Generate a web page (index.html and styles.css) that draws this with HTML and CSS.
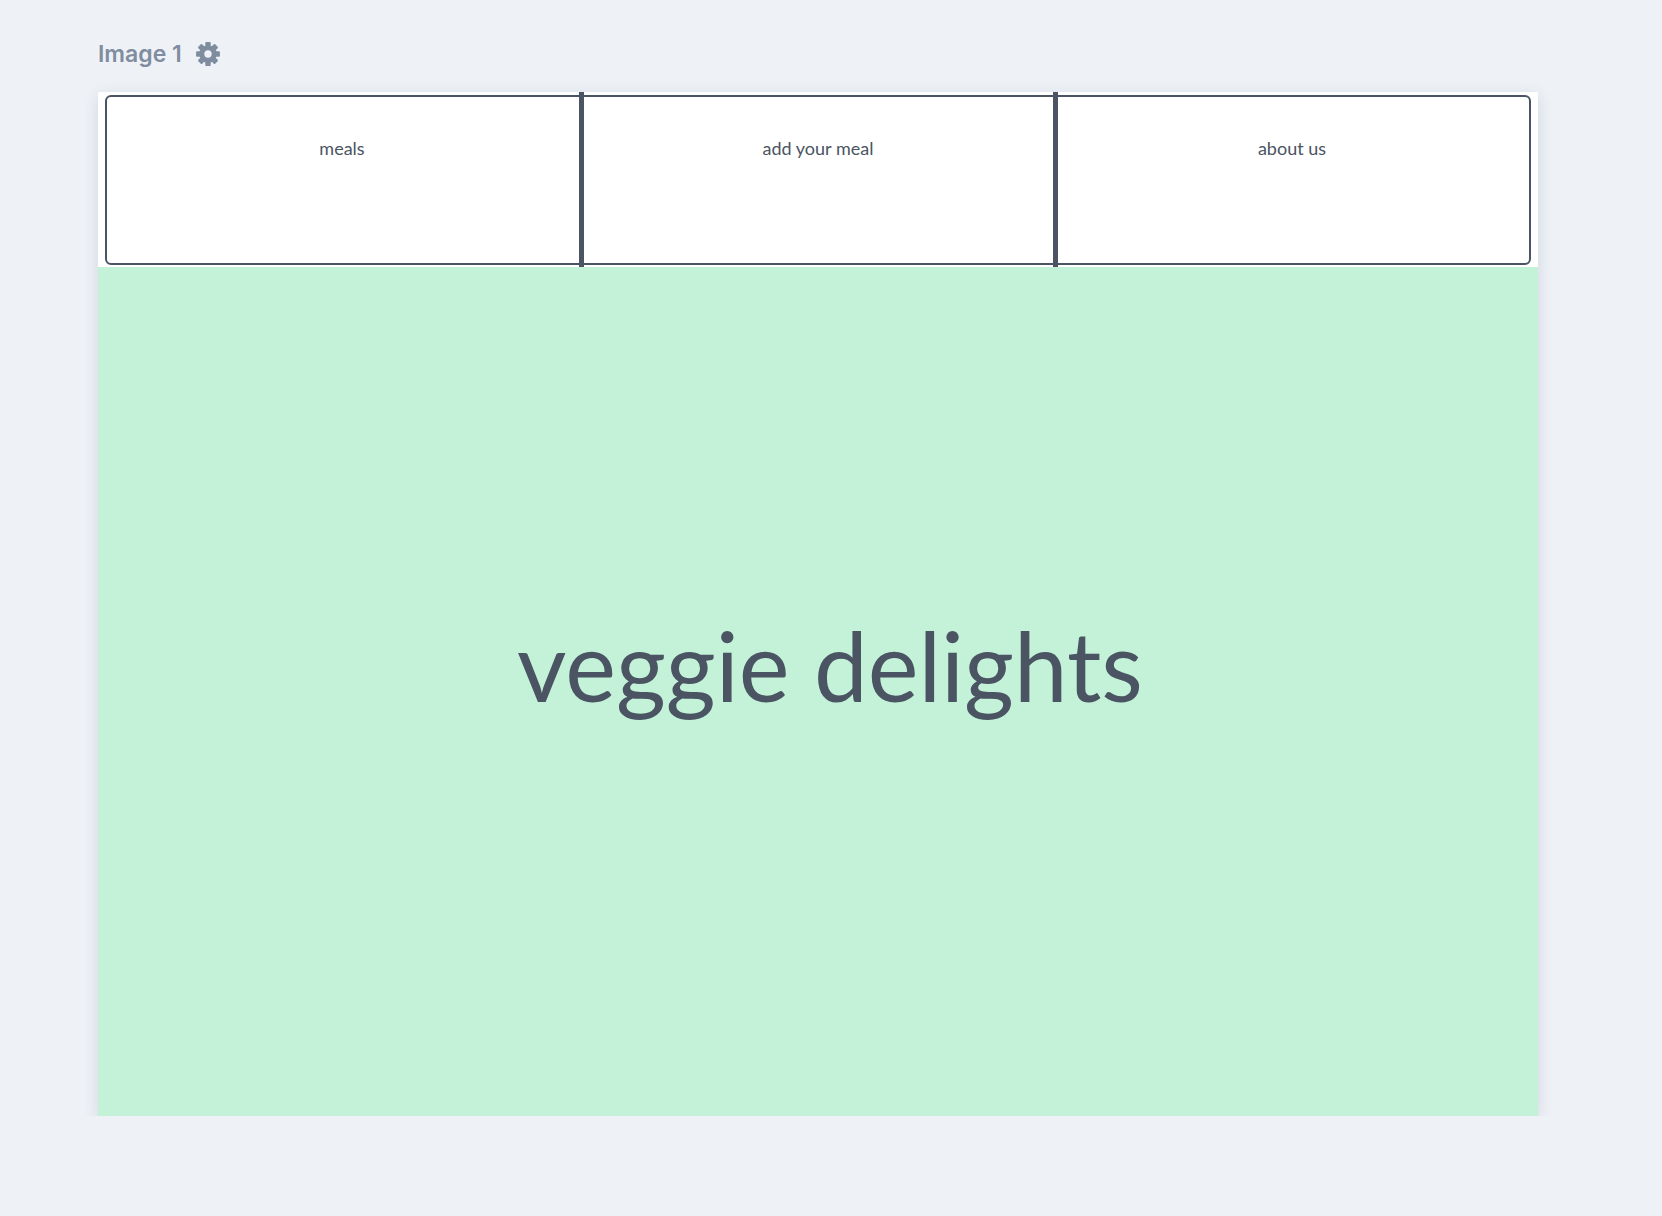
FILE: index.html
```html
<!DOCTYPE html>
<html lang="en">
<head>
<meta charset="utf-8">
<title>Image 1</title>
<link rel="stylesheet" href="styles.css">
</head>
<body>
<div class="page">
  <header class="title-bar">
    <span class="title">Image 1</span>
    <svg class="gear" viewBox="0 0 24 24" width="26" height="26" aria-hidden="true">
      <g fill="#808ca0">
        <circle cx="12" cy="12" r="8"/>
        <rect x="9.5" y="1" width="5" height="5" rx="0.9"/>
        <rect x="9.5" y="1" width="5" height="5" rx="0.9" transform="rotate(45 12 12)"/>
        <rect x="9.5" y="1" width="5" height="5" rx="0.9" transform="rotate(90 12 12)"/>
        <rect x="9.5" y="1" width="5" height="5" rx="0.9" transform="rotate(135 12 12)"/>
        <rect x="9.5" y="1" width="5" height="5" rx="0.9" transform="rotate(180 12 12)"/>
        <rect x="9.5" y="1" width="5" height="5" rx="0.9" transform="rotate(225 12 12)"/>
        <rect x="9.5" y="1" width="5" height="5" rx="0.9" transform="rotate(270 12 12)"/>
        <rect x="9.5" y="1" width="5" height="5" rx="0.9" transform="rotate(315 12 12)"/>
      </g>
      <circle cx="12" cy="12" r="3.4" fill="#eef2f7"/>
    </svg>
  </header>
  <main class="card">
    <nav class="nav">
      <ul class="nav-list">
        <li class="nav-item">meals</li>
        <li class="nav-item">add your meal</li>
        <li class="nav-item">about us</li>
      </ul>
    </nav>
    <section class="hero">
      <h1 class="hero-title">veggie delights</h1>
    </section>
  </main>
</div>
</body>
</html>
```
FILE: styles.css
```css
html, body {
  margin: 0;
  padding: 0;
}
body {
  background: #eef2f7;
  font-family: Lato, "Open Sans", sans-serif;
  color: #4a5462;
}
.page {
  padding: 38px 0 0 98px;
}
.title-bar {
  display: flex;
  align-items: center;
  gap: 13px;
  height: 32px;
  margin-bottom: 22px;
}
.title {
  font-family: Inter, "Liberation Sans", sans-serif;
  font-weight: 600;
  font-size: 23px;
  line-height: 32px;
  color: #808ca0;
}
.gear {
  display: block;
}
.card {
  width: 1440px;
  background: #ffffff;
  box-shadow: 0 4px 14px rgba(60, 70, 100, 0.16);
}
.nav {
  padding: 3px 7px 2px 7px;
}
.nav-list {
  list-style: none;
  margin: 0;
  padding: 0;
  display: grid;
  grid-template-columns: repeat(3, 1fr);
  height: 170px;
  box-sizing: border-box;
  border: 2px solid #4a5462;
  border-radius: 6px;
}
.nav-item {
  position: relative;
  text-align: center;
  padding-top: 40px;
  font-size: 18px;
  line-height: normal;
  color: #4a5462;
}
.nav-item:first-child {
  padding-right: 4px;
}
.nav-item + .nav-item::before {
  content: "";
  position: absolute;
  top: -5px;
  bottom: -4px;
  left: -2px;
  width: 5px;
  background: #4a5462;
}
.hero {
  height: 849px;
  box-sizing: border-box;
  padding: 0 0 54px 24px;
  background: #c3f2d9;
  display: flex;
  align-items: center;
  justify-content: center;
}
.hero-title {
  margin: 0;
  font-weight: 400;
  font-size: 96px;
  line-height: normal;
  color: #4a5462;
}
```
